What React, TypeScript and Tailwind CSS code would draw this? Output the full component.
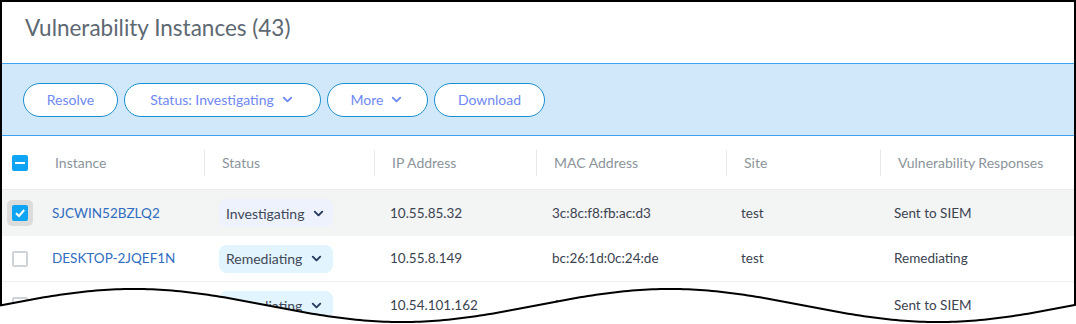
import React from "react";
import { ChevronDown } from "lucide-react";

const font = { fontFamily: "Lato, 'Noto Sans', sans-serif" };

function Wave() {
  const pts: string[] = [];
  for (let x = 0; x <= 1076; x += 4) {
    const y = 21.5 - 16.5 * Math.sin((2 * Math.PI * x) / 536);
    pts.push(`${x},${y.toFixed(2)}`);
  }
  const line = "M" + pts.join(" L");
  const fill = line + " L1076,40 L0,40 Z";
  return (
    <svg className="absolute left-0 bottom-0" width="1076" height="40" viewBox="0 0 1076 40">
      <path d={fill} fill="#ffffff" />
      <path d={line} fill="none" stroke="#000" strokeWidth="2" />
    </svg>
  );
}

function Check({ state }: { state: "checked" | "minus" | "empty" }) {
  if (state === "empty")
    return <div className="w-4 h-4 rounded-[2px] border-2 border-[#cdd3d8] bg-white" />;
  return (
    <div className="w-4 h-4 rounded-[2px] bg-[#10a4f5] flex items-center justify-center">
      {state === "minus" ? (
        <div className="w-[10px] h-[2px] bg-white" />
      ) : (
        <svg width="12" height="12" viewBox="0 0 12 12">
          <path d="M2 6.2 L5 9 L10.2 3" fill="none" stroke="#fff" strokeWidth="2" />
        </svg>
      )}
    </div>
  );
}

const cols = "grid grid-cols-[36px_166px_170px_162px_190px_154px_194px]";

const headers = ["Instance", "Status", "IP Address", "MAC Address", "Site", "Vulnerability Responses"];

type Row = {
  name: string;
  status: string;
  ip: string;
  mac: string;
  site: string;
  resp: string;
  checked: boolean;
};

const rows: Row[] = [
  { name: "SJCWIN52BZLQ2", status: "Investigating", ip: "10.55.85.32", mac: "3c:8c:f8:fb:ac:d3", site: "test", resp: "Sent to SIEM", checked: true },
  { name: "DESKTOP-2JQEF1N", status: "Remediating", ip: "10.55.8.149", mac: "bc:26:1d:0c:24:de", site: "test", resp: "Remediating", checked: false },
  { name: "DESKTOP-7HGA2LK", status: "Remediating", ip: "10.54.101.162", mac: "64:00:6a:1b:2e:9f", site: "test", resp: "Sent to SIEM", checked: false },
];

function Btn({ label, w, chevron }: { label: string; w: string; chevron?: boolean }) {
  return (
    <button
      className={`${w} h-[34px] rounded-full bg-white border border-[#1a8fd0] text-[#6f88f2] text-[14px] flex items-center justify-center gap-[6px]`}
    >
      {label}
      {chevron && <ChevronDown size={15} strokeWidth={3} className="text-[#6f88f2]" />}
    </button>
  );
}

export default function App() {
  return (
    <div className="relative w-[1076px] h-[324px] overflow-hidden bg-white" style={font}>
      <div className="h-full border-l-2 border-t-2 border-r-2 border-black flex flex-col">
        <div className="h-[61px] flex items-center pl-[23px] pb-[9px] text-[22.5px] text-[#5d6872] shrink-0">
          Vulnerability Instances (43)
        </div>
        <div className="h-[73px] shrink-0 bg-[#d1e7fa] border-y border-[#3ea3ee] flex items-center pl-[21px] gap-[6px]">
          <Btn label="Resolve" w="w-[95px]" />
          <Btn label="Status: Investigating" w="w-[197px]" chevron />
          <Btn label="More" w="w-[101px]" chevron />
          <Btn label="Download" w="w-[111px]" />
        </div>
        <div className={`${cols} h-[54px] shrink-0 border-b border-[#ececec] items-center text-[14px] text-[#8b949b]`}>
          <div className="pl-[10px]">
            <Check state="minus" />
          </div>
          {headers.map((h, i) => (
            <div key={h} className={`h-[26px] flex items-center ${i === 0 ? "pl-[17px]" : "pl-[17px] border-l border-[#e6e9eb]"}`}>
              {h}
            </div>
          ))}
        </div>
        {rows.map((r, i) => (
          <div
            key={r.name}
            className={`${cols} h-[46px] shrink-0 items-center text-[13.5px] text-[#3b4350] ${i === 0 ? "bg-[#f3f4f4]" : "bg-white"} ${i === 1 ? "border-b border-[#efefef]" : ""}`}
          >
            <div className="pl-[5px]">
              {r.checked ? (
                <div className="w-[26px] h-[26px] rounded-[5px] bg-[#dcdcdc] flex items-center justify-center">
                  <Check state="checked" />
                </div>
              ) : (
                <div className="pl-[5px]">
                  <Check state="empty" />
                </div>
              )}
            </div>
            <div className="pl-[14px] text-[#2f6dbf] text-[13.5px]">{r.name}</div>
            <div className="pl-[15px]">
              <div
                className={`w-[114px] h-[28px] rounded-[8px] flex items-center pl-[7px] gap-[7px] text-[14px] text-[#3f4858] ${r.status === "Investigating" ? "bg-[#edf2fd]" : "bg-[#e2f4fd]"}`}
              >
                {r.status}
                <ChevronDown size={15} strokeWidth={3} className="text-[#24395c]" />
              </div>
            </div>
            <div className="pl-[16px]">{r.ip}</div>
            <div className="pl-[16px]">{r.mac}</div>
            <div className="pl-[15px]">{r.site}</div>
            <div className="pl-[14px]">{r.resp}</div>
          </div>
        ))}
      </div>
      <Wave />
    </div>
  );
}
